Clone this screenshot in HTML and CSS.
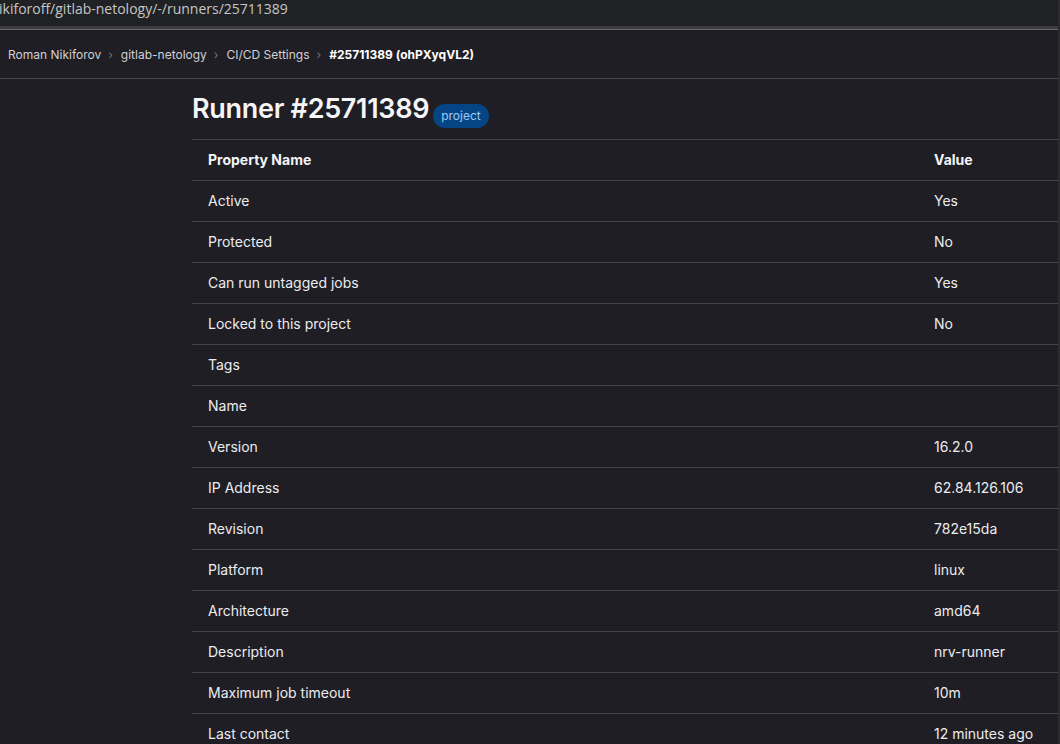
FILE: index.html
```html
<!DOCTYPE html>
<html lang="en">
<head>
<meta charset="utf-8">
<title>Runner #25711389</title>
<link rel="stylesheet" href="styles.css">
</head>
<body>
<div class="urlbar"><span class="url">ikiforoff/gitlab-netology/-/runners/25711389</span></div>
<div class="urlbar-edge"></div>
<nav class="crumbs">
  <a class="crumb">Roman Nikiforov</a><span class="sep">›</span>
  <a class="crumb">gitlab-netology</a><span class="sep">›</span>
  <a class="crumb">CI/CD Settings</a><span class="sep">›</span>
  <span class="crumb current">#25711389 (ohPXyqVL2)</span>
</nav>
<main class="content">
  <h1 class="title">Runner #25711389 <span class="badge">project</span></h1>
  <table class="props">
    <thead>
      <tr><th class="c-name">Property Name</th><th class="c-val">Value</th></tr>
    </thead>
    <tbody>
      <tr><td>Active</td><td>Yes</td></tr>
      <tr><td>Protected</td><td>No</td></tr>
      <tr><td>Can run untagged jobs</td><td>Yes</td></tr>
      <tr><td>Locked to this project</td><td>No</td></tr>
      <tr><td>Tags</td><td></td></tr>
      <tr><td>Name</td><td></td></tr>
      <tr><td>Version</td><td>16.2.0</td></tr>
      <tr><td>IP Address</td><td>62.84.126.106</td></tr>
      <tr><td>Revision</td><td>782e15da</td></tr>
      <tr><td>Platform</td><td>linux</td></tr>
      <tr><td>Architecture</td><td>amd64</td></tr>
      <tr><td>Description</td><td>nrv-runner</td></tr>
      <tr><td>Maximum job timeout</td><td>10m</td></tr>
      <tr><td>Last contact</td><td>12 minutes ago</td></tr>
    </tbody>
  </table>
</main>
</body>
</html>
```

FILE: styles.css
```css
html, body {
  margin: 0;
  padding: 0;
  background: #1f1e24;
  overflow: hidden;
  height: 744px;
}
body {
  font-family: Inter, "Noto Sans", sans-serif;
  color: #ececef;
  border-right: 2px solid #2c2c30;
  box-sizing: border-box;
}
.urlbar {
  height: 26px;
  background: #202124;
  display: flex;
  align-items: flex-start;
}
.url {
  font-family: "Open Sans", "Noto Sans", sans-serif;
  font-size: 14px;
  line-height: 18px;
  color: #c4c7c5;
  margin-left: -1px;
}
.urlbar-edge {
  height: 3px;
  background: #3c3c40;
  border-bottom: 1px solid #6a6a6e;
}
.crumbs {
  height: 48px;
  border-bottom: 1px solid #48474d;
  display: flex;
  align-items: center;
  padding-left: 8px;
  font-size: 12px;
}
.crumb { color: #d0d0d5; }
.crumb.current { color: #fff; font-weight: 700; }
.sep {
  color: #74747a;
  margin: 0 8px 0 7px;
  font-size: 12px;
}
.content {
  padding-left: 192px;
}
.title {
  margin: 0 0 13px;
  padding-top: 13px;
  height: 47px;
  box-sizing: border-box;
  font-size: 27px;
  font-weight: 600;
  letter-spacing: -0.3px;
  line-height: 34px;
  color: #f5f5f7;
  display: flex;
  align-items: center;
  gap: 4px;
}
.badge {
  display: inline-block;
  background: #064585;
  color: #9fcbf5;
  font-size: 12px;
  font-weight: 400;
  letter-spacing: 0;
  line-height: 24px;
  height: 24px;
  padding: 0 8px;
  border-radius: 12px;
  margin-top: 14px;
}
.props {
  width: 100%;
  border-collapse: collapse;
  font-size: 14px;
}
.props th, .props td {
  text-align: left;
  height: 39px;
  padding: 0 16px 1px;
  border-top: 1px solid #434248;
  vertical-align: middle;
}
.props th {
  font-weight: 700;
  color: #f5f5f7;
}
.c-name { width: 694px; }
```
